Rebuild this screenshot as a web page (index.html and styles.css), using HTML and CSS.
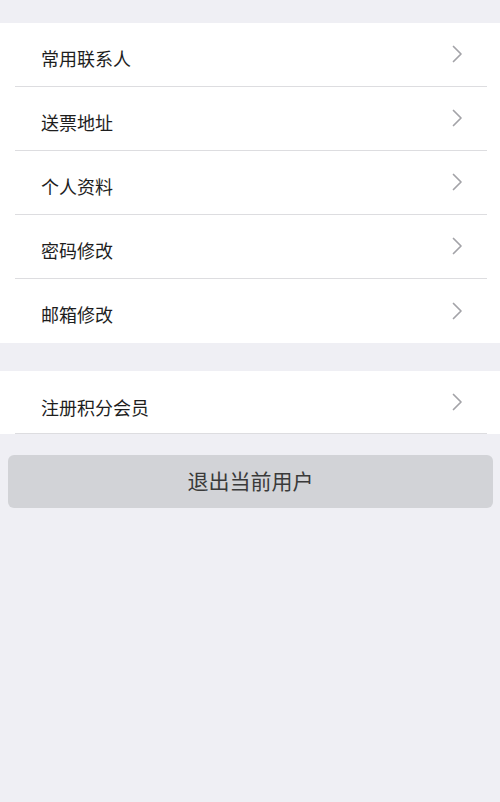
FILE: index.html
```html
<!DOCTYPE html>
<html lang="zh-CN">

<head>
    <meta charset="UTF-8">
    <meta name="viewport" content="width=device-width, initial-scale=1.0">
    <title>我的账户</title>
    <link rel="stylesheet" href="styles.css">
</head>

<body>
    <div class="page">
        <div class="menu-group">
            <div class="menu-row">
                <div class="menu-inner">
                    <span class="menu-label">常用联系人</span>
                    <svg class="chevron" width="11" height="18" viewBox="0 0 11 18"><polyline points="1.5,1.5 9,9 1.5,16.5" /></svg>
                </div>
            </div>
            <div class="menu-row">
                <div class="menu-inner">
                    <span class="menu-label">送票地址</span>
                    <svg class="chevron" width="11" height="18" viewBox="0 0 11 18"><polyline points="1.5,1.5 9,9 1.5,16.5" /></svg>
                </div>
            </div>
            <div class="menu-row">
                <div class="menu-inner">
                    <span class="menu-label">个人资料</span>
                    <svg class="chevron" width="11" height="18" viewBox="0 0 11 18"><polyline points="1.5,1.5 9,9 1.5,16.5" /></svg>
                </div>
            </div>
            <div class="menu-row">
                <div class="menu-inner">
                    <span class="menu-label">密码修改</span>
                    <svg class="chevron" width="11" height="18" viewBox="0 0 11 18"><polyline points="1.5,1.5 9,9 1.5,16.5" /></svg>
                </div>
            </div>
            <div class="menu-row last">
                <div class="menu-inner">
                    <span class="menu-label">邮箱修改</span>
                    <svg class="chevron" width="11" height="18" viewBox="0 0 11 18"><polyline points="1.5,1.5 9,9 1.5,16.5" /></svg>
                </div>
            </div>
        </div>

        <div class="menu-group second">
            <div class="menu-row">
                <div class="menu-inner">
                    <span class="menu-label">注册积分会员</span>
                    <svg class="chevron" width="11" height="18" viewBox="0 0 11 18"><polyline points="1.5,1.5 9,9 1.5,16.5" /></svg>
                </div>
            </div>
        </div>

        <div class="logout-button">退出当前用户</div>
    </div>
</body>

</html>
```

FILE: styles.css
```css
:root {
    --bg: #efeff4;
    --white: #ffffff;
    --line: #dddde0;
    --text: #1e1e1e;
    --arrow: #a3a3a8;
    --button: #d2d3d7;
}

* {
    margin: 0;
    padding: 0;
    box-sizing: border-box;
    font-family: "Noto Sans CJK SC", "Noto Sans", sans-serif;
}

body {
    background: var(--bg);
    min-height: 100vh;
}

.page {
    padding-top: 23px;
}

.menu-group {
    background: var(--white);
}

.menu-group.second {
    margin-top: 28px;
}

.menu-row {
    padding: 0 13px 0 15px;
}

.menu-inner {
    height: 64px;
    border-bottom: 1px solid var(--line);
    display: flex;
    align-items: center;
    justify-content: space-between;
    padding: 0 24px 0 26px;
}

.menu-row.last .menu-inner {
    border-bottom: none;
}

.second .menu-inner {
    height: 63px;
}

.menu-label {
    font-size: 18px;
    color: var(--text);
    margin-top: 6px;
}

.second .menu-label {
    margin-top: 9px;
}

.chevron {
    fill: none;
    stroke: var(--arrow);
    stroke-width: 1.7;
    stroke-linecap: round;
    stroke-linejoin: round;
    margin-top: -1px;
}

.logout-button {
    margin: 21px 7px 0 8px;
    height: 53px;
    padding-bottom: 3px;
    border-radius: 6px;
    background: var(--button);
    color: #3a3a3a;
    font-size: 21px;
    display: flex;
    align-items: center;
    justify-content: center;
}
```
